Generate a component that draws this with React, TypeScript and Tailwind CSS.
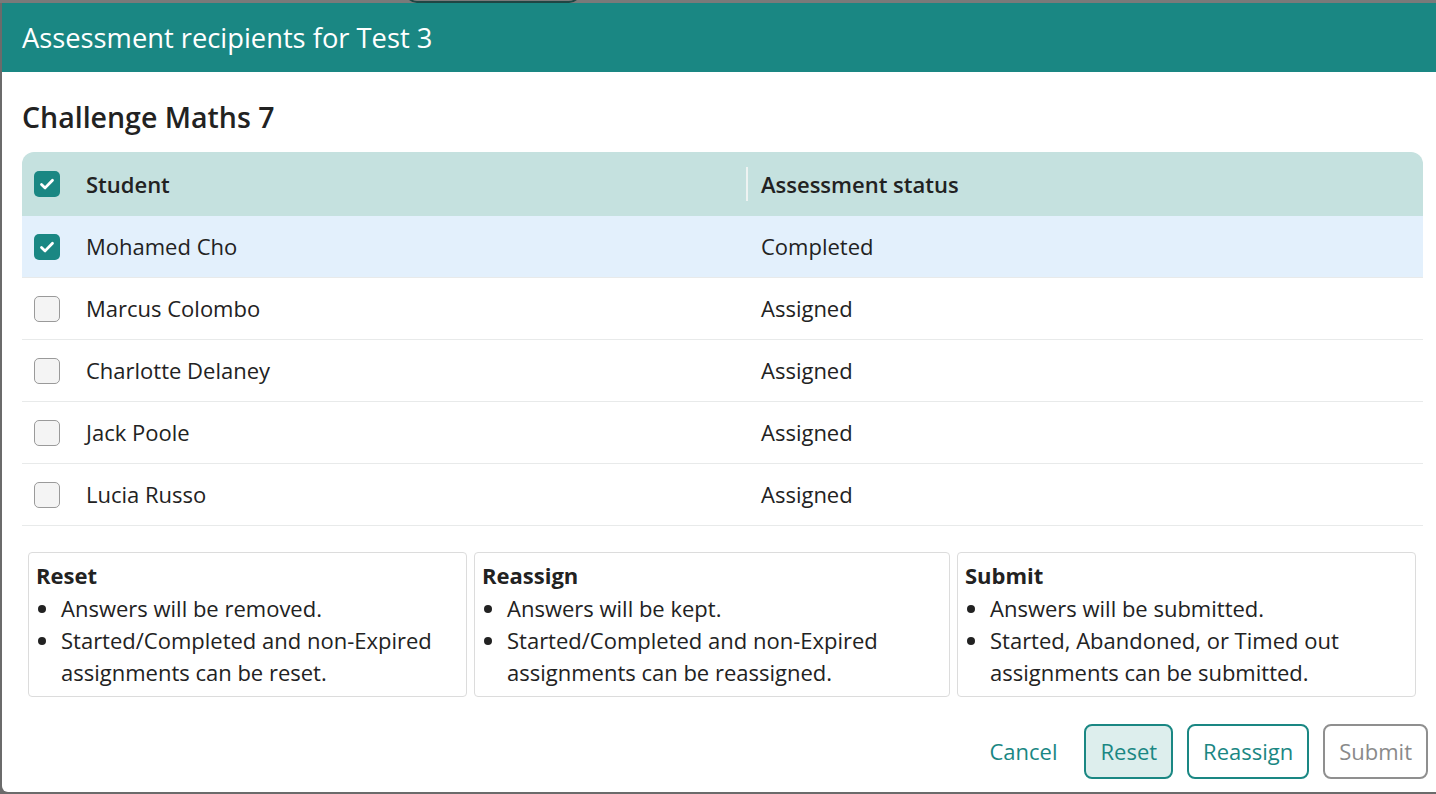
import React from 'react'

const students = [
  { name: 'Mohamed Cho', status: 'Completed', checked: true },
  { name: 'Marcus Colombo', status: 'Assigned', checked: false },
  { name: 'Charlotte Delaney', status: 'Assigned', checked: false },
  { name: 'Jack Poole', status: 'Assigned', checked: false },
  { name: 'Lucia Russo', status: 'Assigned', checked: false },
]

const notes = [
  {
    title: 'Reset',
    width: 'w-[439px]',
    items: ['Answers will be removed.', 'Started/Completed and non-Expired assignments can be reset.'],
  },
  {
    title: 'Reassign',
    width: 'w-[476px]',
    items: ['Answers will be kept.', 'Started/Completed and non-Expired assignments can be reassigned.'],
  },
  {
    title: 'Submit',
    width: 'w-[459px]',
    items: ['Answers will be submitted.', 'Started, Abandoned, or Timed out assignments can be submitted.'],
  },
]

const Checkbox: React.FC<{ checked: boolean }> = ({ checked }) =>
  checked ? (
    <span className="flex h-[26px] w-[26px] items-center justify-center rounded-[5px] bg-[#1a8783]">
      <svg width="18" height="18" viewBox="0 0 18 18" fill="none">
        <path d="M3.5 9.5l3.6 3.4L14.5 5.2" stroke="white" strokeWidth="2.8" strokeLinecap="round" strokeLinejoin="round" />
      </svg>
    </span>
  ) : (
    <span className="block h-[26px] w-[26px] rounded-[5px] border border-[#9a9a9a] bg-[#f4f4f4]" />
  )

export default function App() {
  return (
    <div
      className="relative h-[794px] w-[1436px] overflow-hidden bg-[#6b6b6b] pl-[2px] pt-[3px] text-[#222]"
      style={{ fontFamily: '"Open Sans", "Noto Sans", sans-serif' }}
    >
      <div className="absolute left-0 top-0 h-[3px] w-full bg-[#7a7a7a]" />
      <div className="absolute left-[405px] top-[-22px] h-[25px] w-[176px] rounded-[12px] border-2 border-[#1f4644]" />

      <div className="relative flex h-[789px] w-[1441px] flex-col overflow-hidden rounded-b-[6px] bg-white">
        <div className="flex h-[69px] items-center bg-[#1a8783] px-5">
          <h1 className="text-[27.3px] font-medium leading-none text-white">Assessment recipients for Test 3</h1>
        </div>

        <div className="flex flex-col px-5">
          <h2 className="mt-[27px] text-[28.5px] font-semibold leading-[36px] text-[#222]">Challenge Maths 7</h2>

          <div className="mt-[17px] w-[1401px]">
            <div className="flex h-[64px] items-center rounded-t-[12px] bg-[#c5e1df] text-[22px] font-semibold">
              <div className="flex w-[724px] items-center pl-3">
                <Checkbox checked />
                <span className="ml-[26px]">Student</span>
              </div>
              <div className="h-[34px] w-[2px] bg-[#eef3f2]" />
              <span className="ml-[13px]">Assessment status</span>
            </div>
            {students.map((s) => (
              <div
                key={s.name}
                className={`flex h-[62px] items-center border-b border-[#e8eaea] text-[22px] ${
                  s.checked ? 'bg-[#e3f0fc]' : 'bg-white'
                }`}
              >
                <div className="flex w-[739px] items-center pl-3">
                  <Checkbox checked={s.checked} />
                  <span className="ml-[26px]">{s.name}</span>
                </div>
                <span>{s.status}</span>
              </div>
            ))}
          </div>

          <div className="ml-[6px] mt-[26px] flex gap-[7px]">
            {notes.map((n) => (
              <div key={n.title} className={`${n.width} rounded-[4px] border border-[#dcdcdc] px-[7px] pb-[8px] pt-[6px]`}>
                <div className="text-[22px] font-bold leading-[32px]">{n.title}</div>
                <ul className="mt-[1px] list-disc pl-[25px] text-[22px] leading-[32px]">
                  {n.items.map((it) => (
                    <li key={it}>{it}</li>
                  ))}
                </ul>
              </div>
            ))}
          </div>

          <div className="mt-[27px] flex w-[1406px] items-center justify-end gap-[14px] text-[22px] font-medium">
            <button className="mr-[-3px] h-[55px] px-4 text-[#1a8783]">Cancel</button>
            <button className="h-[55px] rounded-[8px] border-2 border-[#1a8783] bg-[#ddeeed] px-[14px] text-[#1a8783]">
              Reset
            </button>
            <button className="h-[55px] rounded-[8px] border-2 border-[#1a8783] bg-white px-[14px] text-[#1a8783]">
              Reassign
            </button>
            <button className="h-[55px] rounded-[8px] border-2 border-[#8f8f8f] bg-white px-[14px] text-[#8a8a8a]">
              Submit
            </button>
          </div>
        </div>
      </div>
    </div>
  )
}
